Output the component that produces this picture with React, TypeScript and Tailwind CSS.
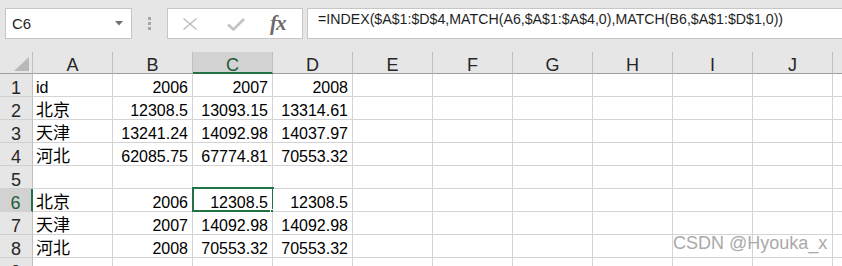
import React from 'react';

const COLS = ['A', 'B', 'C', 'D', 'E', 'F', 'G', 'H', 'I', 'J', 'K'];

const DATA: string[][] = [
  ['id', '2006', '2007', '2008'],
  ['北京', '12308.5', '13093.15', '13314.61'],
  ['天津', '13241.24', '14092.98', '14037.97'],
  ['河北', '62085.75', '67774.81', '70553.32'],
  [],
  ['北京', '2006', '12308.5', '12308.5'],
  ['天津', '2007', '14092.98', '14092.98'],
  ['河北', '2008', '70553.32', '70553.32'],
  [],
];

const isNum = (s: string) => /^[0-9.]+$/.test(s);
const isCJK = (s: string) => /[\u4e00-\u9fff]/.test(s);

function Toolbar() {
  return (
    <div className="flex h-[52px] items-start bg-[#e6e6e6] pt-[8px]">
      {/* Name box */}
      <div className="ml-[5px] flex h-[31px] w-[127px] items-center border border-[#c6c6c6] bg-white">
        <span className="ml-[6px] text-[15px] leading-[18px] text-[#1f1f1f]">C6</span>
        <svg className="ml-auto mr-[8px]" width="8" height="5" viewBox="0 0 8 5">
          <path d="M0 0 L8 0 L4 4.5 Z" fill="#707070" />
        </svg>
      </div>
      {/* dots */}
      <div className="ml-[16px] mt-[9px] flex w-[4px] flex-col gap-[2px]">
        <div className="h-[3px] w-[3px] bg-[#a6a6a6]" />
        <div className="h-[3px] w-[3px] bg-[#a6a6a6]" />
        <div className="h-[3px] w-[3px] bg-[#a6a6a6]" />
      </div>
      {/* fx box */}
      <div className="ml-[15px] flex h-[31px] w-[136px] items-center border border-[#c6c6c6] bg-white">
        <svg className="ml-[14px]" width="16" height="14" viewBox="0 0 16 14">
          <path d="M1.5 1.5 L14.5 12.5 M14.5 1.5 L1.5 12.5" stroke="#bcbcbc" strokeWidth="1.4" fill="none" />
        </svg>
        <svg className="ml-[29px] mt-[2px]" width="18" height="13" viewBox="0 0 18 13">
          <path d="M1 6.5 L6.5 11.5 L17 1" stroke="#c2c2c2" strokeWidth="2.6" fill="none" />
        </svg>
        <span
          className="ml-[25px] mt-[-2px] text-[21px] font-bold italic leading-[20px] text-[#6b6b6b]"
          style={{ fontFamily: '"Liberation Serif", serif', letterSpacing: '-1px' }}
        >
          fx
        </span>
      </div>
      {/* formula */}
      <div className="ml-[4px] flex h-[31px] flex-1 items-start border border-[#c6c6c6] border-r-0 bg-white">
        <span className="ml-[10px] mt-[1px] whitespace-nowrap text-[14.2px] leading-[18px] text-[#1f1f1f]">
          =INDEX($A$1:$D$4,MATCH(A6,$A$1:$A$4,0),MATCH(B6,$A$1:$D$1,0))
        </span>
      </div>
    </div>
  );
}

function HeaderRow() {
  return (
    <div className="flex h-[22px]">
      <div className="relative h-[22px] w-[33px] shrink-0 border-b border-r border-[#9e9e9e] border-r-[#c0c0c0] bg-[#e6e6e6]">
        <svg className="absolute left-[14px] top-[5px]" width="15" height="14" viewBox="0 0 15 14">
          <path d="M15 0 L15 14 L0 14 Z" fill="#b8b8b8" />
        </svg>
      </div>
      {COLS.map((c, i) => {
        const sel = c === 'C';
        const last = i === COLS.length - 1;
        return (
          <div
            key={c}
            className={`h-[22px] ${last ? 'flex-1' : 'w-[80px] shrink-0 border-r border-r-[#c0c0c0]'} ${
              sel ? 'border-b-2 border-b-[#217346] bg-[#d2d2d2] text-[#1d5c37]' : 'border-b border-b-[#9e9e9e] bg-[#e6e6e6] text-[#262626]'
            } overflow-hidden pt-[5px] text-center text-[18px] leading-[16px]`}
          >
            {last ? '' : c}
          </div>
        );
      })}
    </div>
  );
}

function Row({ idx, cells }: { idx: number; cells: string[] }) {
  const selRow = idx === 6;
  return (
    <div className="flex h-[23px]">
      <div
        className={`h-[23px] w-[33px] shrink-0 border-b border-b-[#cfcfcf] ${
          selRow ? 'border-r-2 border-r-[#217346] bg-[#d2d2d2] text-[#1d5c37]' : 'border-r border-r-[#c0c0c0] bg-[#e6e6e6] text-[#262626]'
        } overflow-hidden pt-[6px] text-center text-[18px] leading-[16px]`}
      >
        {idx}
      </div>
      {COLS.map((c, i) => {
        const v = cells[i] ?? '';
        const last = i === COLS.length - 1;
        const sel = selRow && c === 'C';
        const num = isNum(v);
        return (
          <div
            key={c}
            className={`relative h-[23px] ${last ? 'flex-1' : 'w-[80px] shrink-0 border-r'} border-b border-[#d4d4d4] bg-white`}
          >
            {v && (
              <div
                className={`whitespace-nowrap pt-[6px] leading-[16px] text-black ${num ? 'pr-[4px] text-right' : 'pl-[3px] text-left'} ${
                  isCJK(v) ? 'text-[17px]' : 'text-[16px]'
                }`}
              >
                {v}
              </div>
            )}
            {sel && (
              <>
                <div className="absolute left-[-1px] top-[-2px] h-[25px] w-[82px] border-2 border-[#217346]" />
                <div className="absolute left-[77px] top-[20px] h-[6px] w-[6px] border border-white bg-[#217346]" />
              </>
            )}
          </div>
        );
      })}
    </div>
  );
}

export default function App() {
  return (
    <div
      className="relative h-[266px] w-[842px] overflow-hidden bg-white"
      style={{ fontFamily: '"Liberation Sans", "Noto Sans CJK SC", sans-serif' }}
    >
      <Toolbar />
      <HeaderRow />
      {DATA.map((cells, i) => (
        <Row key={i} idx={i + 1} cells={cells} />
      ))}
      <div className="pointer-events-none absolute left-[673px] top-[234px] whitespace-nowrap text-[18px] leading-[18px] text-[#a9a9a9]">
        CSDN @Hyouka_x
      </div>
    </div>
  );
}
